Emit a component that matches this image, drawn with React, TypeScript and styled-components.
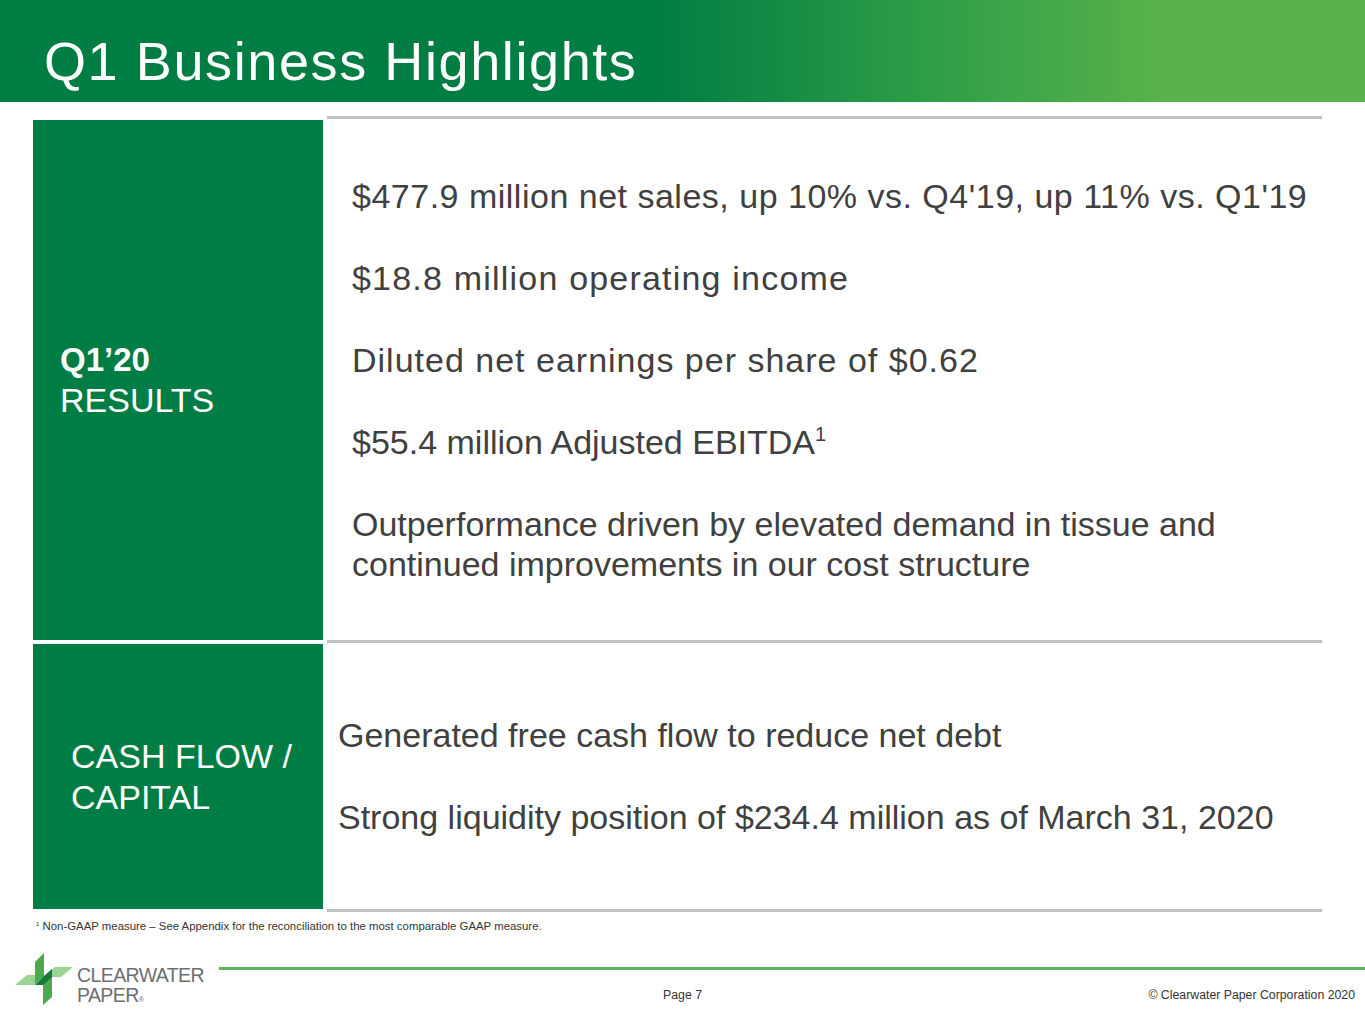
import React from 'react'
import styled, { createGlobalStyle } from 'styled-components'

const GlobalStyle = createGlobalStyle`
  html, body {
    margin: 0;
    padding: 0;
    background: #fff;
    font-family: "Liberation Sans", Arial, sans-serif;
  }
`

const Page = styled.div`
  width: 1365px;
  height: 1024px;
  display: flex;
  flex-direction: column;
  background: #fff;
  overflow: hidden;
`

const Header = styled.header`
  height: 102px;
  box-sizing: border-box;
  padding: 34px 0 0 44px;
  background: linear-gradient(90deg, #007d42 0%, #007d42 48%, #2e9e47 68%, #58b24a 85%, #58b24a 100%);
`

const Title = styled.h1`
  margin: 0;
  font-size: 54px;
  line-height: 54px;
  font-weight: normal;
  letter-spacing: 1.6px;
  color: #fff;
`

const Body = styled.main`
  padding: 14px 0 0 33px;
  width: 1289px;
`

const Section = styled.section<{ $h: number }>`
  display: grid;
  grid-template-columns: 290px 1fr;
  column-gap: 4px;
  height: ${p => p.$h}px;
`

const Label = styled.div<{ $pl: number }>`
  margin-top: 4px;
  background: #007d44;
  color: #fff;
  display: flex;
  flex-direction: column;
  justify-content: center;
  padding-left: ${p => p.$pl}px;
  font-size: 34px;
  line-height: 41px;
`

const LabelStrong = styled.span`
  font-weight: bold;
  font-size: 33px;
`

const Content = styled.div<{ $pl: number }>`
  border-top: 3px solid #c0c0c0;
  display: flex;
  flex-direction: column;
  justify-content: center;
  padding-left: ${p => p.$pl}px;
`

const Point = styled.p<{ $ls?: number }>`
  margin: 0 0 42px;
  font-size: 34px;
  line-height: 40px;
  color: #404040;
  white-space: nowrap;
  letter-spacing: ${p => p.$ls ?? 0}px;
  &:last-child {
    margin-bottom: 0;
  }
  sup {
    font-size: 20px;
    line-height: 0;
    vertical-align: 13px;
  }
`

const BottomRule = styled.div`
  margin-left: 294px;
  height: 3px;
  background: #c0c0c0;
`

const Footnote = styled.p`
  margin: 8px 0 0 3px;
  font-size: 11.4px;
  color: #333;
  sup {
    font-size: 6px;
    vertical-align: 4px;
    line-height: 0;
  }
`

const Footer = styled.footer`
  margin-top: 20px;
  display: grid;
  grid-template-columns: 219px 1fr;
`

const Logo = styled.div`
  display: flex;
  align-items: flex-start;
  padding: 0 0 0 14px;
  gap: 3px;
`

const LogoWords = styled.div`
  margin-top: 13px;
  font-size: 19.5px;
  line-height: 20px;
  color: #6d6e71;
  letter-spacing: -0.6px;
  sup {
    font-size: 7px;
    line-height: 0;
    vertical-align: 0;
    letter-spacing: 0;
  }
`

const LogoLine = styled.div`
  height: 20px;
`

const FooterRight = styled.div`
  display: flex;
  flex-direction: column;
`

const GreenRule = styled.div`
  margin-top: 15px;
  height: 3px;
  background: #62b35a;
`

const FooterRow = styled.div`
  display: flex;
  padding: 18px 10px 0 444px;
  font-size: 12.3px;
  color: #333;
`

const Copy = styled.span`
  margin-left: auto;
`

const LogoMark = () => (
  <svg width="60" height="54" viewBox="0 0 60 54">
    <polygon points="1,33 13,23 33,23 21,33" fill="#9bd395" />
    <polygon points="29,25 41,15 59,15 47,25" fill="#9bd395" />
    <polygon points="21,10 30,1 30,24 21,32" fill="#4aaa4c" />
    <polygon points="29,31 38,23 38,45 29,53" fill="#4aaa4c" />
    <polygon points="21,33 30,24 38,17 38,25 29,33" fill="#157b3d" />
  </svg>
)

export default function App() {
  return (
    <Page>
      <GlobalStyle />
      <Header>
        <Title>Q1 Business Highlights</Title>
      </Header>
      <Body>
        <Section $h={524}>
          <Label $pl={27}>
            <LabelStrong>Q1’20</LabelStrong>
            <span>RESULTS</span>
          </Label>
          <Content $pl={25}>
            <Point $ls={0.5}>$477.9 million net sales, up 10% vs. Q4'19, up 11% vs. Q1'19</Point>
            <Point $ls={1.2}>$18.8 million operating income</Point>
            <Point $ls={1}>Diluted net earnings per share of $0.62</Point>
            <Point>
              $55.4 million Adjusted EBITDA<sup>1</sup>
            </Point>
            <Point>
              Outperformance driven by elevated demand in tissue and
              <br />
              continued improvements in our cost structure
            </Point>
          </Content>
        </Section>
        <Section $h={269}>
          <Label $pl={38}>
            <span>CASH FLOW /</span>
            <span>CAPITAL</span>
          </Label>
          <Content $pl={11}>
            <Point>Generated free cash flow to reduce net debt</Point>
            <Point>Strong liquidity position of $234.4 million as of March 31, 2020</Point>
          </Content>
        </Section>
        <BottomRule />
        <Footnote>
          <sup>1</sup> Non-GAAP measure – See Appendix for the reconciliation to the most comparable GAAP measure.
        </Footnote>
      </Body>
      <Footer>
        <Logo>
          <LogoMark />
          <LogoWords>
            <LogoLine>CLEARWATER</LogoLine>
            <LogoLine>
              PAPER<sup>®</sup>
            </LogoLine>
          </LogoWords>
        </Logo>
        <FooterRight>
          <GreenRule />
          <FooterRow>
            <span>Page 7</span>
            <Copy>© Clearwater Paper Corporation 2020</Copy>
          </FooterRow>
        </FooterRight>
      </Footer>
    </Page>
  )
}
